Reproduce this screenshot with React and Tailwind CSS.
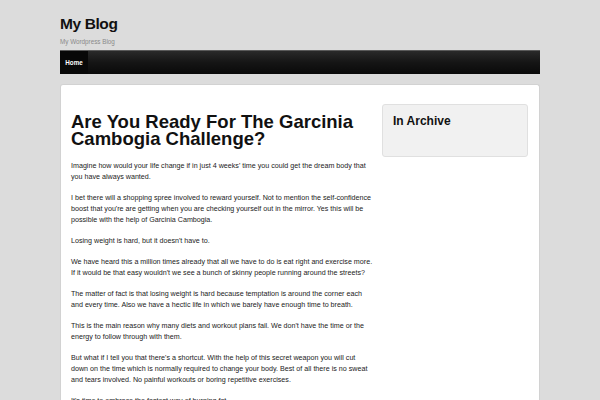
import React from 'react';

const paragraphs = [
  "Imagine how would your life change if in just 4 weeks' time you could get the dream body that you have always wanted.",
  "I bet there will a shopping spree involved to reward yourself. Not to mention the self-confidence boost that you're are getting when you are checking yourself out in the mirror. Yes this will be possible with the help of Garcinia Cambogia.",
  "Losing weight is hard, but it doesn't have to.",
  "We have heard this a million times already that all we have to do is eat right and exercise more. If it would be that easy wouldn't we see a bunch of skinny people running around the streets?",
  "The matter of fact is that losing weight is hard because temptation is around the corner each and every time. Also we have a hectic life in which we barely have enough time to breath.",
  "This is the main reason why many diets and workout plans fail. We don't have the time or the energy to follow through with them.",
  "But what if I tell you that there's a shortcut. With the help of this secret weapon you will cut down on the time which is normally required to change your body. Best of all there is no sweat and tears involved. No painful workouts or boring repetitive exercises.",
  "It's time to embrace the fastest way of burning fat.",
];

export default function App() {
  return (
    <div className="min-h-screen bg-[#dcdcdc] font-['Liberation_Sans',Arial,sans-serif]">
      <div className="w-[480px] mx-auto pt-[15px]">
        {/* header */}
        <h1 className="text-[15.5px] leading-[18px] font-bold tracking-[-0.4px] text-[#111]">My Blog</h1>
        <p className="mt-[5px] text-[6.3px] leading-[8px] text-[#8a8a8a]">My Wordpress Blog</p>

        {/* nav */}
        <nav className="mt-[4px] h-[24px] flex bg-gradient-to-b from-[#2a2a2a] via-[#151515] to-[#0a0a0a] border-t border-[#5a5a5a]">
          <a className="w-[28px] flex items-center justify-center bg-[#080808] text-white text-[6.3px] font-bold">Home</a>
        </nav>

        {/* content */}
        <div className="mt-[10px] bg-white rounded-t-[3px] border border-[#d2d2d2] border-b-0 flex gap-[8px] pl-[10px] pr-[11px] pt-[19px] pb-[20px]">
          <main className="w-[303px] pt-[10px]">
            <h2 className="text-[18.5px] leading-[16.7px] font-bold text-[#111]">
              Are You Ready For The Garcinia Cambogia Challenge?
            </h2>
            <div className="mt-[14px] text-[7.15px] leading-[10.7px] text-[#222]">
              {paragraphs.map((p, i) => (
                <p key={i} className="mb-[10.6px]">{p}</p>
              ))}
            </div>
          </main>

          <aside className="w-[146px]">
            <div className="bg-[#f1f1f1] border border-[#e0e0e0] rounded-[3px] h-[53px] px-[10px] pt-[9px]">
              <h3 className="text-[12px] leading-[14px] font-bold text-[#111]">In Archive</h3>
            </div>
          </aside>
        </div>
      </div>
    </div>
  );
}
